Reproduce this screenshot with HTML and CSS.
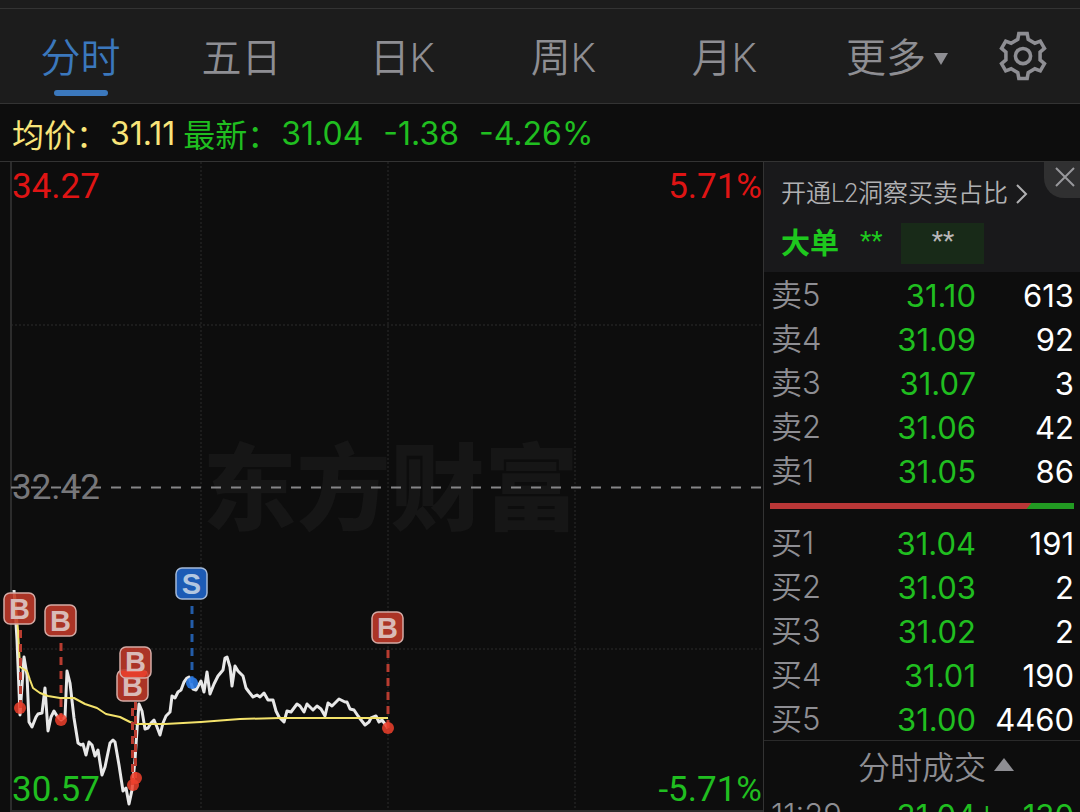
FILE: index.html
```html
<!DOCTYPE html>
<html lang="zh-CN">
<head>
    <meta charset="UTF-8">
    <meta name="viewport" content="width=device-width, initial-scale=1.0">
    <title>分时行情</title>
    <link rel="stylesheet" href="styles.css">
</head>
<body>
    <nav class="tabs">
        <button class="tab active">分时</button>
        <button class="tab">五日</button>
        <button class="tab">日K</button>
        <button class="tab">周K</button>
        <button class="tab">月K</button>
        <button class="tab more">更多<span class="arrow-down"></span></button>
        <button class="setting" aria-label="设置">
            <svg viewBox="-24 -24 48 48" width="50" height="50" fill="none" stroke="#8e8e93" stroke-width="3.4">
                <path d="M-4-21.5H4L5-16 11.4-12.3 16.6-14.2 20.6-7.3 16.4-3.7V3.7L20.6 7.3 16.6 14.2 11.4 12.3 5 16 4 21.5H-4L-5 16-11.4 12.3-16.6 14.2-20.6 7.3-16.4 3.7V-3.7L-20.6-7.3-16.6-14.2-11.4-12.3-5-16Z"/>
                <circle r="7.3"/>
            </svg>
        </button>
    </nav>

    <div class="quote">
        <span class="avg">均价：</span><span class="avg num">31.11</span>
        <span class="down">最新：</span><span class="down num">31.04</span>
        <span class="down num">-1.38</span>
        <span class="down num">-4.26%</span>
    </div>

    <main class="main">
        <section class="chart">
            <div class="watermark">东方财富</div>
            <svg class="plot" viewBox="0 162 763 650">
                <!-- 网格 -->
                <g class="grid">
                    <path d="M201 162V811M388 162V811M575 162V811M11 325H763M11 649H763"/>
                </g>
                <path class="frame" d="M11 162V811H763"/>
                <path class="middle" d="M11 487.5H763"/>

                <!-- 均价线 / 分时线 -->
                <polyline class="price-line" points="14,590 17,640 20,715 24,657 27,675 29,722 32,727 36,717 38,714 42,713 45,688 48,731 51,717 54,711 57,716 61,720 65,717 67,671 70,683 74,718 78,743 81,745 83,744 86,755 89,742 92,745 95,756 98,750 102,775 105,767 110,743 113,740 115,742 119,765 123,791 126,788 129,804 132,790 135,760 137,730 139,704 142,711 145,729 148,728 151,723 154,720 157,727 160,735 163,723 166,716 170,712 172,696 175,698 178,692 181,690 184,682 187,678 189,677 193,689 196,690 201,681 204,692 207,672 210,694 214,684 218,676 223,670 225,658 227,657 230,667 232,686 235,666 238,671 243,676 246,688 249,692 253,697 257,695 260,697 264,693 268,700 273,700 276,711 279,717 284,722 287,711 291,712 297,704 300,706 304,712 307,704 313,710 317,706 321,709 325,716 328,703 332,706 339,699 345,702 347,702 350,709 354,710 358,716 365,725 369,722 371,718 376,716 379,722 382,720 388,728"/>
                <polyline class="avg-line" points="15,595 18,630 20,667 27,671 30,680 33,688 40,693 48,696 60,698 74,698 85,704 97,708 106,714 120,717 130,722 137,724 165,724 201,722 240,719 280,718 388,718"/>

                <!-- 买卖点 -->
                <g class="mark buy">
                    <path d="M20.500 630V708"/>
                    <circle cx="20" cy="708" r="6"/>
                    <rect x="4" y="593" width="31" height="31" rx="6"/>
                    <text x="19.500" y="619">B</text>
                </g>
                <g class="mark buy">
                    <path d="M61 643V720"/>
                    <circle cx="61" cy="720" r="6"/>
                    <rect x="45" y="605" width="31" height="31" rx="6"/>
                    <text x="60.500" y="631">B</text>
                </g>
                <g class="mark buy">
                    <path d="M132.500 708V785"/>
                    <circle cx="133" cy="785" r="6"/>
                    <rect x="117" y="670" width="31" height="31" rx="6"/>
                    <text x="132.500" y="696">B</text>
                </g>
                <g class="mark buy">
                    <path d="M135.500 702V778"/>
                    <circle cx="136" cy="778" r="6"/>
                    <rect x="120" y="647" width="31" height="31" rx="6"/>
                    <text x="135.500" y="672">B</text>
                    <path class="overlap" d="M121 671H147V673Q146 677 142 677H126Q121 677 121 671Z"/>
                </g>
                <g class="mark sell">
                    <path d="M192 606V683"/>
                    <circle cx="192" cy="683" r="6"/>
                    <rect x="176" y="568" width="31" height="31" rx="6"/>
                    <text x="191.500" y="594">S</text>
                </g>
                <g class="mark buy">
                    <path d="M388 650V728"/>
                    <circle cx="388" cy="728" r="6"/>
                    <rect x="372" y="612" width="31" height="31" rx="6"/>
                    <text x="387.500" y="638">B</text>
                </g>
            </svg>
            <span class="axis top-left">34.27</span>
            <span class="axis top-right">5.71%</span>
            <span class="axis mid-left">32.42</span>
            <span class="axis bottom-left">30.57</span>
            <span class="axis bottom-right">-5.71%</span>
        </section>

        <aside class="panel">
            <div class="l2">
                <a href="#" class="l2-link">开通L2洞察买卖占比<svg viewBox="0 0 12 20" width="12" height="20" fill="none" stroke="#b0b0b2" stroke-width="2"><path d="M1 1L10 10L1 19"/></svg></a>
                <div class="big-order">
                    <strong>大单</strong>
                    <span class="stars">**</span>
                    <span class="stars-box">**</span>
                </div>
                <button class="close" aria-label="关闭">
                    <svg viewBox="0 0 20 20" width="20" height="20" stroke="#98989b" stroke-width="2"><path d="M1 1L19 19M19 1L1 19"/></svg>
                </button>
            </div>

            <table class="orders">
                <tr><th>卖5</th><td class="price">31.10</td><td>613</td></tr>
                <tr><th>卖4</th><td class="price">31.09</td><td>92</td></tr>
                <tr><th>卖3</th><td class="price">31.07</td><td>3</td></tr>
                <tr><th>卖2</th><td class="price">31.06</td><td>42</td></tr>
                <tr><th>卖1</th><td class="price">31.05</td><td>86</td></tr>
            </table>
            <div class="ratio">
                <div class="ratio-buy" style="width: 86%"></div>
            </div>
            <table class="orders">
                <tr><th>买1</th><td class="price">31.04</td><td>191</td></tr>
                <tr><th>买2</th><td class="price">31.03</td><td>2</td></tr>
                <tr><th>买3</th><td class="price">31.02</td><td>2</td></tr>
                <tr><th>买4</th><td class="price">31.01</td><td>190</td></tr>
                <tr><th>买5</th><td class="price">31.00</td><td>4460</td></tr>
            </table>

            <button class="deals-title">分时成交<span class="arrow-up"></span></button>
            <table class="orders deals">
                <tr><th>11:29</th><td class="price">31.04<span class="tick">↓</span></td><td class="price">130</td></tr>
            </table>
        </aside>
    </main>
</body>
</html>
```

FILE: styles.css
```css
* {
    box-sizing: border-box;
}
body {
    display: flex;
    flex-direction: column;
    height: 100vh;
    margin: 0;
    overflow: hidden;
    background: #0d0d0d;
    color: #fff;
    font-family: Roboto, "Noto Sans CJK SC", sans-serif;
}
button {
    padding: 0;
    border: none;
    background: none;
    color: inherit;
    font-family: inherit;
    cursor: pointer;
}

/* 顶部周期切换 */
.tabs {
    display: flex;
    flex-shrink: 0;
    height: 104px;
    padding: 8px 24px 0 0;
    background: linear-gradient(#333, #333) 0 8px / 100% 1px no-repeat #1c1c1c;
    border-bottom: 1px solid #333;
}
.tab {
    position: relative;
    flex: 161 1 0;
    padding-top: 6px;
    color: #8e8e93;
    font-size: 40px;
    font-weight: 350;
    line-height: 48px;
}
.tab.active {
    color: #3b78bd;
}
.tab.active::after {
    content: "";
    position: absolute;
    left: 50%;
    bottom: 7px;
    width: 54px;
    height: 6px;
    margin-left: -27px;
    border-radius: 3px;
    background: #3b78bd;
}
.tab.more {
    display: flex;
    flex-grow: 184;
    align-items: center;
    justify-content: center;
    gap: 8px;
}
.arrow-down {
    border: 7px solid transparent;
    border-top: 12px solid #8e8e93;
    border-bottom: 0;
}
.setting {
    display: flex;
    flex: 67 1 0;
    align-items: center;
    justify-content: center;
}

/* 均价、最新价 */
.quote {
    display: flex;
    flex-shrink: 0;
    align-items: center;
    height: 58px;
    padding-left: 12px;
    border-bottom: 1px solid #333;
    font-size: 32px;
    white-space: nowrap;
}
.quote .num {
    margin-right: 18px;
    padding: 2px 0 0 2px;
    font-family: Inter, sans-serif;
}
.quote .avg.num {
    margin-right: 8px;
}
.avg {
    color: #f8e479;
}
.down {
    color: #20be20;
}

.main {
    display: flex;
    flex: 1;
    min-height: 0;
}

/* 分时图 */
.chart {
    position: relative;
    flex: 1;
    min-width: 0;
}
.plot {
    position: relative;
    display: block;
    width: 100%;
}
.watermark {
    position: absolute;
    top: 42%;
    left: 0;
    width: 100%;
    padding: 4px 0 0 18px;
    color: #161616;
    font-size: 94px;
    font-weight: 900;
    line-height: 104px;
    text-align: center;
}
.grid {
    fill: none;
    stroke: #2c2c2c;
    stroke-dasharray: 2 2;
}
.frame {
    fill: none;
    stroke: #2c2c2c;
    stroke-width: 2;
}
.middle {
    stroke: #858587;
    stroke-width: 2;
    stroke-dasharray: 10 10;
}
.price-line {
    fill: none;
    stroke: #e8e8e8;
    stroke-width: 3;
    stroke-linejoin: round;
}
.avg-line {
    fill: none;
    stroke: #f3e26b;
    stroke-width: 2;
    stroke-linejoin: round;
}
.mark path {
    stroke-width: 3;
    stroke-dasharray: 8 6;
}
.mark rect {
    stroke: #d3aaa5;
    stroke-width: 1.5;
}
.mark text {
    fill: #d9bab7;
    font-family: "Liberation Sans", sans-serif;
    font-size: 29px;
    font-weight: bold;
    text-anchor: middle;
}
.buy path {
    stroke: #b83c30;
}
.buy rect {
    fill: #c23a2a;
    fill-opacity: 0.88;
}
.buy circle {
    fill: #ef412d;
    fill-opacity: 0.85;
}
.buy .overlap {
    fill: #f2402c;
    fill-opacity: 0.7;
    stroke: none;
}
.sell path {
    stroke: #235ca8;
}
.sell rect {
    fill: #1d5bb5;
    stroke: #a4b9d7;
}
.sell circle {
    fill: #2c7be5;
    fill-opacity: 0.9;
}
.sell text {
    fill: #b3c6e0;
}
.axis {
    position: absolute;
    font-size: 35px;
    line-height: 42px;
}
.top-left {
    top: 4px;
    left: 12px;
    color: #df1414;
}
.top-right {
    top: 4px;
    right: 1px;
    color: #df1414;
}
.mid-left {
    top: 50%;
    left: 12px;
    margin-top: -20px;
    color: #77777a;
}
.bottom-left {
    bottom: 1px;
    left: 12px;
    color: #20be20;
}
.bottom-right {
    right: 1px;
    bottom: 1px;
    color: #20be20;
}

/* 右侧盘口 */
.panel {
    flex: 0 0 317px;
    border-left: 1px solid #333;
    overflow: hidden;
}
.l2 {
    position: relative;
    height: 110px;
    padding: 14px 0 0 17px;
    background: #19191b;
}
.l2-link {
    display: flex;
    align-items: center;
    gap: 8px;
    color: #b0b0b2;
    font-size: 25px;
    font-weight: 350;
    line-height: 36px;
    text-decoration: none;
    white-space: nowrap;
}
.big-order {
    display: flex;
    align-items: center;
    height: 41px;
    margin-top: 11px;
    color: #1ec81e;
    font-size: 29px;
}
.big-order strong {
    padding-bottom: 5px;
}
.stars {
    margin: 0 19px 0 21px;
    padding-bottom: 5px;
    font-size: 26px;
}
.stars-box {
    width: 83px;
    height: 41px;
    background: #182a18;
    color: #b8b8b8;
    font-size: 26px;
    line-height: 36px;
    text-align: center;
}
.close {
    position: absolute;
    top: 0;
    right: 0;
    display: flex;
    align-items: center;
    justify-content: center;
    width: 36px;
    height: 36px;
    padding-left: 6px;
    padding-bottom: 6px;
    border-bottom-left-radius: 20px;
    background: #303031;
}
.orders {
    width: 100%;
    table-layout: fixed;
    border-collapse: collapse;
}
.orders th,
.orders td {
    height: 44px;
    padding: 4px 0 0;
    font-family: Inter, "Noto Sans CJK SC", sans-serif;
    font-size: 31px;
    font-weight: 400;
    line-height: 40px;
    text-align: right;
    white-space: nowrap;
}
.orders th {
    width: 92px;
    padding: 2px 0 0 7px;
    color: #8e8e93;
    font-weight: 350;
    text-align: left;
}
.orders td:last-child {
    width: 104px;
    padding-right: 6px;
}
.orders .price {
    color: #20be20;
}
.ratio {
    height: 6px;
    margin: 11px 6px;
    background: #229a22;
}
.ratio-buy {
    height: 6px;
    background: #b93737;
    clip-path: polygon(0 0, 100% 0, calc(100% - 5px) 100%, 0 100%);
}
.deals-title {
    display: flex;
    align-items: center;
    justify-content: center;
    gap: 8px;
    width: 100%;
    height: 52px;
    padding: 0 0 4px 28px;
    border-top: 1px solid #2a2a2a;
    color: #8e8e93;
    font-size: 32px;
    font-weight: 350;
}
.arrow-up {
    border: 10px solid transparent;
    border-top: 0;
    border-bottom: 13px solid #8e8e93;
}
.deals .price {
    position: relative;
}
.tick {
    position: absolute;
    left: 100%;
    font-size: 26px;
}
```
